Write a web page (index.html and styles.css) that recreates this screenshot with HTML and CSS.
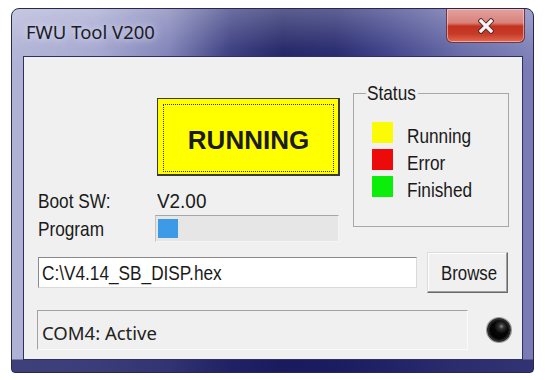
FILE: index.html
```html
<!DOCTYPE html>
<html>
<head>
<meta charset="utf-8">
<link rel="stylesheet" href="styles.css">
</head>
<body>
<div class="window">
  <div class="titlebar">
    <span class="title">FWU Tool V200</span>
    <div class="close">
      <svg width="16" height="16" viewBox="0 0 16 16">
        <path d="M3 3 L13 13 M13 3 L3 13" stroke="#5a2a2a" stroke-width="5.2" stroke-linecap="square" fill="none"/>
        <path d="M3 3 L13 13 M13 3 L3 13" stroke="#f4f4f4" stroke-width="3.2" stroke-linecap="square" fill="none"/>
      </svg>
    </div>
  </div>
  <div class="client">
    <div class="top">
      <div class="left">
        <div class="running"><div class="focus">RUNNING</div></div>
        <div class="row boot"><span class="lbl"><span class="nar">Boot SW:</span></span><span class="val"><span class="nar">V2.00</span></span></div>
        <div class="row prog"><span class="lbl"><span class="nar">Program</span></span><div class="progress"><div class="chunk" style="width:20px"></div></div></div>
      </div>
      <fieldset class="group">
        <legend><span class="nar">Status</span></legend>
        <div class="item"><span class="sq yellow"></span><span class="itxt"><span class="nar">Running</span></span></div>
        <div class="item"><span class="sq red"></span><span class="itxt"><span class="nar">Error</span></span></div>
        <div class="item"><span class="sq green"></span><span class="itxt"><span class="nar">Finished</span></span></div>
      </fieldset>
    </div>
    <div class="filerow">
      <div class="path"><span class="nar">C:\V4.14_SB_DISP.hex</span></div>
      <div class="browse"><span class="nar">Browse</span></div>
    </div>
    <div class="statusrow">
      <div class="statuspanel">COM4: Active</div>
      <div class="led"></div>
    </div>
  </div>
</div>
</body>
</html>
```
FILE: styles.css
```css
* { box-sizing: border-box; }
html, body { margin: 0; padding: 0; background: #ffffff; }
body { width: 545px; height: 380px; overflow: hidden; }

.window {
  margin: 8px 0 0 11px;
  width: 523px;
  height: 365px;
  border: 1px solid #262850;
  border-radius: 8px 8px 4px 4px;
  background:
    linear-gradient(0deg, rgba(24,26,92,0.75) 0px, rgba(24,26,92,0.75) 12px, rgba(24,26,92,0) 13px),
    linear-gradient(180deg, rgba(255,255,255,0.28) 0px, rgba(255,255,255,0.06) 40px, rgba(0,0,0,0) 60px),
    linear-gradient(90deg, #b1b3d5 0%, #a5a7cf 16%, #7d80b6 30%, #34377c 42%, #1c1f62 52%, #20236a 62%, #393c86 72%, #6366a4 86%, #7b7eb6 100%);
  display: flex;
  flex-direction: column;
  overflow: hidden;
}

.titlebar {
  height: 47px;
  display: flex;
  align-items: flex-start;
}
.title {
  font-family: "Noto Sans", sans-serif;
  font-size: 18.5px;
  line-height: 22px;
  color: #1c1c24;
  margin: 12px 0 0 14px;
  text-shadow: 0 0 6px rgba(230,232,255,0.8), 0 0 12px rgba(230,232,255,0.5);
}
.close {
  margin-left: auto;
  margin-right: 8px;
  width: 79px;
  height: 34px;
  border: 1px solid #6a3a48;
  border-top: none;
  border-radius: 0 0 6px 6px;
  background: linear-gradient(180deg, #e3a19d 0%, #d8827a 42%, #c3321f 52%, #c53a27 75%, #e46a52 100%);
  box-shadow: inset 0 0 0 1px rgba(255,215,215,0.55);
  display: flex;
  align-items: center;
  justify-content: center;
  padding-top: 1px;
}

.client {
  margin: 0 10px 0 11px;
  height: 304px;
  background: #f0f0f0;
  border: 1px solid #2d3060;
  padding-left: 14px;
  font-family: "Liberation Sans", Arial, sans-serif;
  color: #1a1a1a;
}

.nar {
  display: inline-block;
  transform: scaleX(0.82);
  transform-origin: 0 50%;
  white-space: nowrap;
}

.top { display: flex; align-items: flex-start; }
.left { width: 302px; }

.running {
  margin: 41px 0 0 119px;
  width: 183px;
  height: 78px;
  background: #ffff00;
  border: 1px solid #3a3a3a;
  border-right-width: 2px;
  border-bottom-width: 2px;
  padding: 5px 4px 2px 5px;
}
.focus {
  height: 100%;
  border: 1px dotted #333;
  display: flex;
  align-items: center;
  justify-content: center;
  font-family: "Liberation Sans", Arial, sans-serif;
  font-weight: bold;
  font-size: 26px;
  color: #1b1b1b;
  padding-top: 4px;
}

.row { display: flex; align-items: center; font-size: 21px; }
.boot { height: 22px; margin-top: 14px; line-height: 22px; }
.prog { height: 27px; margin-top: 3px; line-height: 22px; }
.boot .lbl { width: 119px; }
.prog .lbl { width: 117px; }
.val .nar { transform: scaleX(0.9); }

.progress {
  width: 184px;
  height: 27px;
  background: #e6e6e6;
  border-top: 1px solid #a6a6a6;
  border-left: 1px solid #c4c4c4;
  border-right: 1px solid #f4f4f4;
  border-bottom: 1px solid #f4f4f4;
  padding: 3px 2px;
}
.chunk { height: 100%; background: #3c9ae6; }

.group {
  margin: 26px 0 0 13px;
  width: 156px;
  border: 1px solid #a7a7a7;
  padding: 19px 0 29px 12px;
  min-width: 0;
}
.group legend {
  padding: 0 1px;
  width: 52px;
  font-size: 21px;
  line-height: 20px;
}
.item {
  display: flex;
  align-items: flex-start;
  height: 21px;
  margin: 0 0 6px 6px;
  gap: 14px;
  font-size: 21px;
}
.item:last-child { margin-bottom: 0; }
.itxt { line-height: 21px; margin-top: 3px; }
.sq { width: 21px; height: 21px; flex: none; }
.yellow { background: #fbfb05; }
.red { background: #ec0a0a; }
.green { background: #0aee0a; }

.filerow {
  display: flex;
  align-items: center;
  height: 41px;
  margin-top: 10px;
  gap: 10px;
}
.path {
  width: 379px;
  height: 31px;
  background: #ffffff;
  border-top: 1px solid #8a8a8a;
  border-left: 1px solid #8a8a8a;
  border-right: 1px solid #dadada;
  border-bottom: 1px solid #dadada;
  font-size: 21px;
  line-height: 29px;
  padding-left: 3px;
  white-space: nowrap;
}
.browse {
  width: 81px;
  height: 41px;
  background: #f0f0f0;
  border: 1px solid;
  border-color: #dcdcdc #6a6a6a #6a6a6a #dcdcdc;
  box-shadow: inset -1px -1px 0 #a0a0a0, inset 1px 1px 0 #ffffff;
  font-size: 20.5px;
  line-height: 37px;
  padding: 1px 0 0 13px;
}

.statusrow {
  display: flex;
  align-items: center;
  margin-top: 17px;
  height: 40px;
}
.statuspanel {
  width: 431px;
  height: 40px;
  margin-left: -1px;
  border-top: 1px solid #a2a2a2;
  border-left: 1px solid #a2a2a2;
  border-right: 1px solid #fafafa;
  border-bottom: 1px solid #fafafa;
  font-family: "Noto Sans", sans-serif;
  font-size: 18.5px;
  line-height: 38px;
  padding: 3px 0 0 4px;
  color: #222;
}
.led {
  margin-left: 19px;
  width: 24px;
  height: 24px;
  border-radius: 50%;
  border: 2px solid #2b2b2b;
  background: radial-gradient(circle at 62% 32%, #8a8a8a 0, #333 14%, #050505 40%, #000 100%);
  box-shadow: 0 0 0 1px #9a9a9a, inset 0 0 0 1px #111;
}
```
